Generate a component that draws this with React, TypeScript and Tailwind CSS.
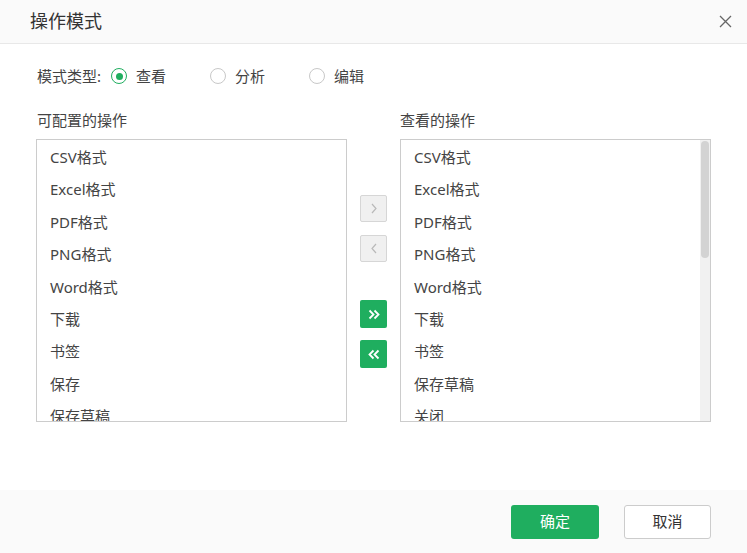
import React from "react";

const FONT = '"Noto Sans", "Noto Sans CJK SC", sans-serif';

const left = ["CSV格式", "Excel格式", "PDF格式", "PNG格式", "Word格式", "下载", "书签", "保存", "保存草稿", "关闭"];
const right = ["CSV格式", "Excel格式", "PDF格式", "PNG格式", "Word格式", "下载", "书签", "保存草稿", "关闭", "保存"];

const Radio = ({ label, checked = false }: { label: string; checked?: boolean }) => (
    <label className="flex items-center w-[99px]">
        <span
            className={
                "w-4 h-4 rounded-full border flex items-center justify-center bg-white " +
                (checked ? "border-[#1fae5f]" : "border-[#c8c8c8]")
            }
        >
            {checked && <span className="w-[7px] h-[7px] rounded-full bg-[#1fae5f]" />}
        </span>
        <span className="ml-[9px]">{label}</span>
    </label>
);

const ListBox = ({ items, scroll = false }: { items: string[]; scroll?: boolean }) => (
    <div className="h-[283px] border border-[#cccccc] flex overflow-hidden bg-white">
        <ul className="flex-1 pt-px overflow-hidden">
            {items.map((item) => (
                <li key={item} className="h-[32.4px] leading-[32.4px] pl-[13px] whitespace-nowrap">
                    {item}
                </li>
            ))}
        </ul>
        {scroll && (
            <div className="w-[10px] bg-[#f1f1f1] pt-px">
                <div className="mx-px h-[117px] rounded-full bg-[#d3d3d3]" />
            </div>
        )}
    </div>
);

const Chevron = ({ dir, double = false }: { dir: "l" | "r"; double?: boolean }) => {
    const one = dir === "r" ? "M2 1l4 4.5L2 10" : "M6 1L2 5.5 6 10";
    if (!double) {
        return (
            <svg width="8" height="11" viewBox="0 0 8 11" fill="none" stroke="#b9b9b9" strokeWidth="1.2">
                <path d={one} />
            </svg>
        );
    }
    const d = dir === "r" ? "M1.5 1.5l4 4-4 4M6.5 1.5l4 4-4 4" : "M10.5 1.5l-4 4 4 4M5.5 1.5l-4 4 4 4";
    return (
        <svg width="12" height="11" viewBox="0 0 12 11" fill="none" stroke="#ffffff" strokeWidth="1.8">
            <path d={d} />
        </svg>
    );
};

export default function App() {
    return (
        <div className="w-[747px] h-[553px] flex flex-col bg-white text-[15px] text-[#444444]" style={{ fontFamily: FONT }}>
            <div className="h-[44px] shrink-0 bg-[#fafafa] border-b border-[#e8e8e8] flex items-center justify-between pl-[30px] pr-[15px]">
                <span className="text-[18px] text-[#333333]">操作模式</span>
                <svg width="13" height="13" viewBox="0 0 13 13" stroke="#666666" strokeWidth="1.3">
                    <path d="M1 1l11 11M12 1L1 12" />
                </svg>
            </div>

            <div className="flex-1 px-[36px] pt-[22px]">
                <div className="flex items-center h-5 pl-px">
                    <span className="mr-[10px]">模式类型:</span>
                    <Radio label="查看" checked />
                    <Radio label="分析" />
                    <Radio label="编辑" />
                </div>

                <div className="flex gap-[13px] mt-[24px]">
                    <div className="w-[311px]">
                        <div className="h-5 leading-5 pl-px mb-[9px]">可配置的操作</div>
                        <ListBox items={left} />
                    </div>
                    <div className="w-[27px] pt-[85px] flex flex-col">
                        <button className="w-[27px] h-[27px] rounded-[2px] border border-[#d6d6d6] bg-[#f0f0f0] flex items-center justify-center">
                            <Chevron dir="r" />
                        </button>
                        <button className="mt-[13px] w-[27px] h-[27px] rounded-[2px] border border-[#d6d6d6] bg-[#f0f0f0] flex items-center justify-center">
                            <Chevron dir="l" />
                        </button>
                        <button className="mt-[38px] w-[27px] h-[28px] rounded-[2px] bg-[#1fae5f] flex items-center justify-center">
                            <Chevron dir="r" double />
                        </button>
                        <button className="mt-[12px] w-[27px] h-[28px] rounded-[2px] bg-[#1fae5f] flex items-center justify-center">
                            <Chevron dir="l" double />
                        </button>
                    </div>
                    <div className="w-[311px]">
                        <div className="h-5 leading-5 mb-[9px]">查看的操作</div>
                        <ListBox items={right} scroll />
                    </div>
                </div>
            </div>

            <div className="h-[63px] shrink-0 bg-[#fafafa] flex items-center justify-end gap-[25px] pr-[36px]">
                <button className="w-[88px] h-[34px] rounded-[3px] bg-[#1fae5f] text-white text-[15px]">确定</button>
                <button className="w-[87px] h-[34px] rounded-[3px] border border-[#cccccc] bg-white text-[15px] text-[#333333]">取消</button>
            </div>
        </div>
    );
}
